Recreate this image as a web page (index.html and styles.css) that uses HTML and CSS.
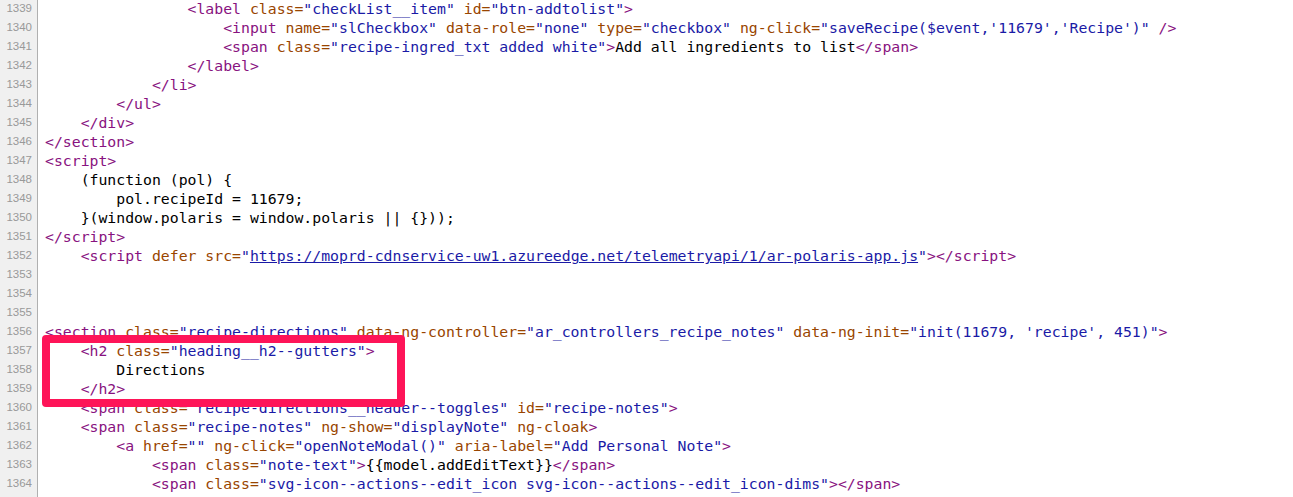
FILE: index.html
```html
<!DOCTYPE html>
<html>
<head>
    <title>view-source</title>
    <link rel="stylesheet" href="styles.css">
</head>
<body>
    <div class="source">
        <div class="line"><span class="num">1339</span><span class="code">                <span class="tag">&lt;label </span><span class="attr">class=</span><span class="val">"checkList__item"</span><span class="attr"> id=</span><span class="val">"btn-addtolist"</span><span class="tag">&gt;</span></span></div>
        <div class="line"><span class="num">1340</span><span class="code">                    <span class="tag">&lt;input </span><span class="attr">name=</span><span class="val">"slCheckbox"</span><span class="attr"> data-role=</span><span class="val">"none"</span><span class="attr"> type=</span><span class="val">"checkbox"</span><span class="attr"> ng-click=</span><span class="val">"saveRecipe($event,'11679','Recipe')"</span><span class="tag"> /&gt;</span></span></div>
        <div class="line"><span class="num">1341</span><span class="code">                    <span class="tag">&lt;span </span><span class="attr">class=</span><span class="val">"recipe-ingred_txt added white"</span><span class="tag">&gt;</span>Add all ingredients to list<span class="tag">&lt;/span&gt;</span></span></div>
        <div class="line"><span class="num">1342</span><span class="code">                <span class="tag">&lt;/label&gt;</span></span></div>
        <div class="line"><span class="num">1343</span><span class="code">            <span class="tag">&lt;/li&gt;</span></span></div>
        <div class="line"><span class="num">1344</span><span class="code">        <span class="tag">&lt;/ul&gt;</span></span></div>
        <div class="line"><span class="num">1345</span><span class="code">    <span class="tag">&lt;/div&gt;</span></span></div>
        <div class="line"><span class="num">1346</span><span class="code"><span class="tag">&lt;/section&gt;</span></span></div>
        <div class="line"><span class="num">1347</span><span class="code"><span class="tag">&lt;script&gt;</span></span></div>
        <div class="line"><span class="num">1348</span><span class="code">    (function (pol) {</span></div>
        <div class="line"><span class="num">1349</span><span class="code">        pol.recipeId = 11679;</span></div>
        <div class="line"><span class="num">1350</span><span class="code">    }(window.polaris = window.polaris || {}));</span></div>
        <div class="line"><span class="num">1351</span><span class="code"><span class="tag">&lt;/script&gt;</span></span></div>
        <div class="line"><span class="num">1352</span><span class="code">    <span class="tag">&lt;script </span><span class="attr">defer src=</span><span class="val">"<a class="link" href="#">https://moprd-cdnservice-uw1.azureedge.net/telemetryapi/1/ar-polaris-app.js</a>"</span><span class="tag">&gt;&lt;/script&gt;</span></span></div>
        <div class="line"><span class="num">1353</span><span class="code"></span></div>
        <div class="line"><span class="num">1354</span><span class="code"></span></div>
        <div class="line"><span class="num">1355</span><span class="code"></span></div>
        <div class="line"><span class="num">1356</span><span class="code"><span class="tag">&lt;section </span><span class="attr">class=</span><span class="val">"recipe-directions"</span><span class="attr"> data-ng-controller=</span><span class="val">"ar_controllers_recipe_notes"</span><span class="attr"> data-ng-init=</span><span class="val">"init(11679, 'recipe', 451)"</span><span class="tag">&gt;</span></span></div>
        <div class="line"><span class="num">1357</span><span class="code">    <span class="tag">&lt;h2 </span><span class="attr">class=</span><span class="val">"heading__h2--gutters"</span><span class="tag">&gt;</span></span></div>
        <div class="line"><span class="num">1358</span><span class="code">        Directions</span></div>
        <div class="line"><span class="num">1359</span><span class="code">    <span class="tag">&lt;/h2&gt;</span></span></div>
        <div class="line"><span class="num">1360</span><span class="code">    <span class="tag">&lt;span </span><span class="attr">class=</span><span class="val">"recipe-directions__header--toggles"</span><span class="attr"> id=</span><span class="val">"recipe-notes"</span><span class="tag">&gt;</span></span></div>
        <div class="line"><span class="num">1361</span><span class="code">    <span class="tag">&lt;span </span><span class="attr">class=</span><span class="val">"recipe-notes"</span><span class="attr"> ng-show=</span><span class="val">"displayNote"</span><span class="attr"> ng-cloak</span><span class="tag">&gt;</span></span></div>
        <div class="line"><span class="num">1362</span><span class="code">        <span class="tag">&lt;a </span><span class="attr">href=</span><span class="val">""</span><span class="attr"> ng-click=</span><span class="val">"openNoteModal()"</span><span class="attr"> aria-label=</span><span class="val">"Add Personal Note"</span><span class="tag">&gt;</span></span></div>
        <div class="line"><span class="num">1363</span><span class="code">            <span class="tag">&lt;span </span><span class="attr">class=</span><span class="val">"note-text"</span><span class="tag">&gt;</span>{{model.addEditText}}<span class="tag">&lt;/span&gt;</span></span></div>
        <div class="line"><span class="num">1364</span><span class="code">            <span class="tag">&lt;span </span><span class="attr">class=</span><span class="val">"svg-icon--actions--edit_icon svg-icon--actions--edit_icon-dims"</span><span class="tag">&gt;&lt;/span&gt;</span></span></div>
        <div class="line"><span class="num">1365</span><span class="code">        <span class="tag">&lt;/a&gt;</span></span></div>

        <div class="highlight"></div>
    </div>
</body>
</html>
```

FILE: styles.css
```css
body {
    margin: 0;
    background-color: white;
    overflow: hidden;
}

.source {
    position: relative;
    margin-top: -1px;
}

.line {
    display: flex;
    height: 19px;
    line-height: 19px;
}

.num {
    flex: 0 0 32px;
    padding-right: 5px;
    text-align: right;
    background-color: #f0f0f0;
    border-right: 1px solid #b0b0b0;
    color: #999;
    font-family: "Liberation Sans", Arial, sans-serif;
    font-size: 11.5px;
}

.code {
    padding-left: 7px;
    white-space: pre;
    color: black;
    font-family: "DejaVu Sans Mono", monospace;
    font-size: 14.8px;
}

.tag {
    color: #881280;
}

.attr {
    color: #994500;
}

.val {
    color: #1a1aa6;
}

.link {
    color: #1a1aa6;
    text-decoration: underline;
}

/* red marker box drawn over the code */
.highlight {
    position: absolute;
    left: 42px;
    top: 336px;
    width: 347px;
    height: 56px;
    border: 8px solid #fe1458;
    border-radius: 4px;
}
```
